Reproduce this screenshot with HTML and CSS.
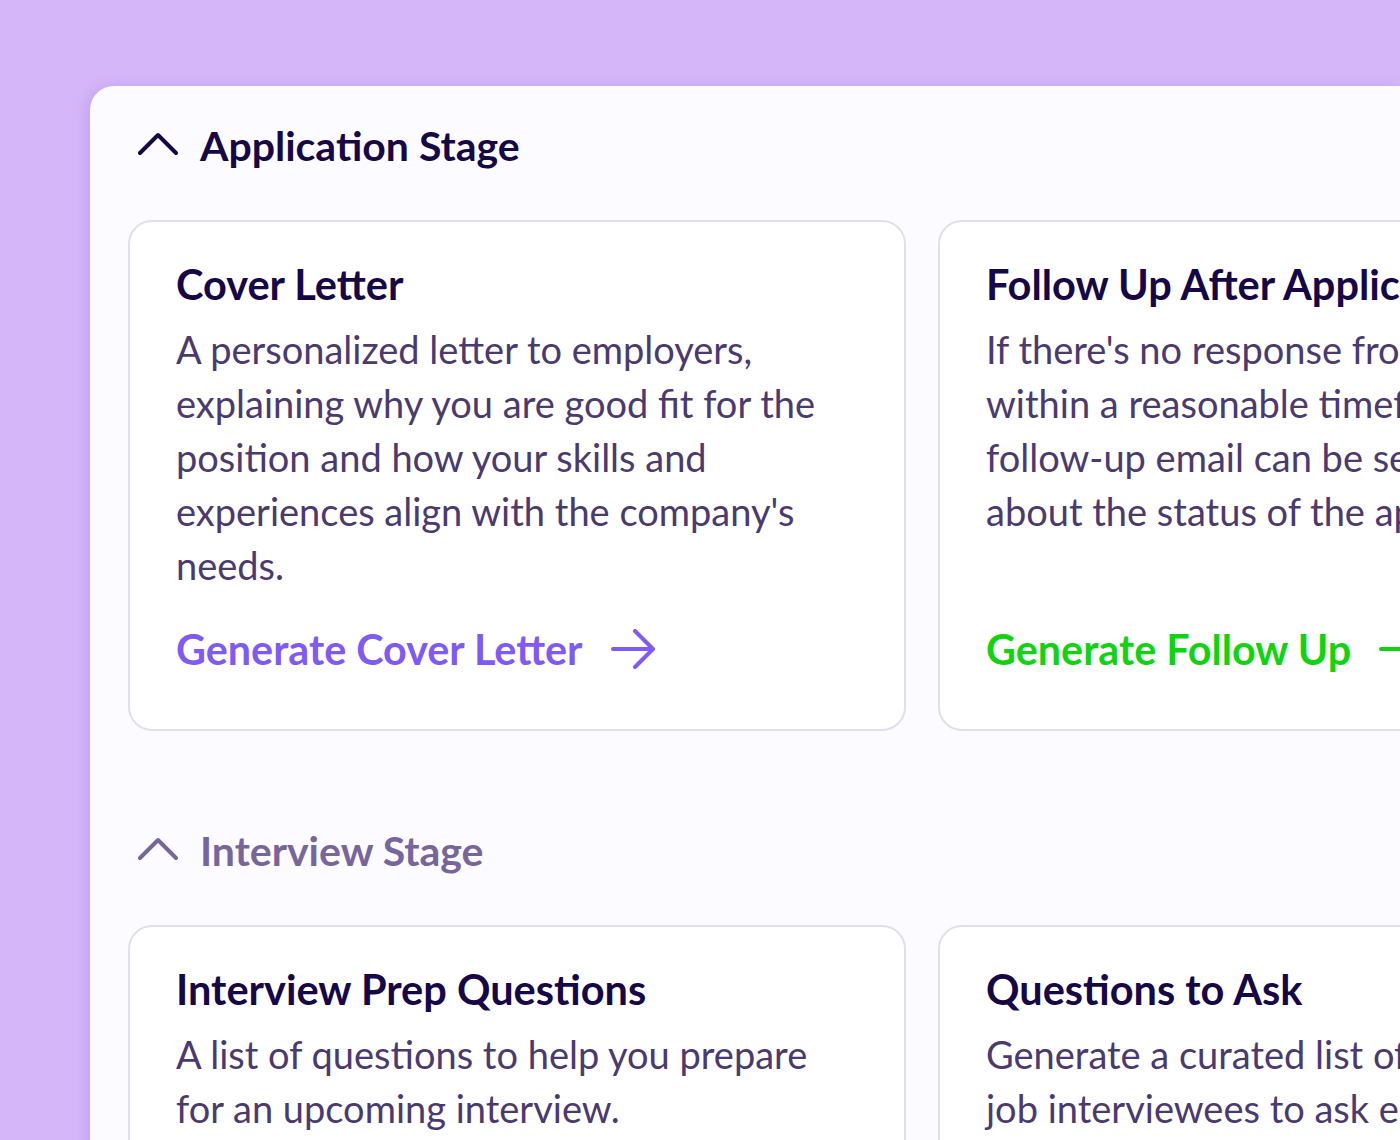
FILE: index.html
```html
<!DOCTYPE html>
<html lang="en">
<head>
<meta charset="utf-8">
<title>Stages</title>
<link rel="stylesheet" href="styles.css">
</head>
<body>
<main class="panel">
  <section class="stage">
    <h2 class="stage-head">
      <svg class="chevron" width="40" height="24" viewBox="0 0 40 24"><polyline points="2,21 20,3 38,21" fill="none" stroke="currentColor" stroke-width="4" stroke-linecap="round" stroke-linejoin="round"/></svg>
      <span>Application Stage</span>
    </h2>
    <div class="cards">
      <article class="card">
        <h3 class="card-title">Cover Letter</h3>
        <p class="card-desc">A personalized letter to employers, explaining why you are good fit for the position and how your skills and experiences align with the company's needs.</p>
        <a class="card-link purple" href="#">Generate Cover Letter
          <svg class="arrow" width="46" height="40" viewBox="0 0 46 40"><path d="M3 20H43M25 2L43 20L25 38" fill="none" stroke="currentColor" stroke-width="4" stroke-linecap="round" stroke-linejoin="round"/></svg>
        </a>
      </article>
      <article class="card">
        <h3 class="card-title">Follow Up After Application</h3>
        <p class="card-desc">If there's no response from the employer within a reasonable timeframe, a follow&#8209;up email can be sent to inquire about the status of the application.</p>
        <a class="card-link green" href="#">Generate Follow Up
          <svg class="arrow" width="46" height="40" viewBox="0 0 46 40"><path d="M3 20H43M25 2L43 20L25 38" fill="none" stroke="currentColor" stroke-width="4" stroke-linecap="round" stroke-linejoin="round"/></svg>
        </a>
      </article>
    </div>
  </section>
  <section class="stage">
    <h2 class="stage-head muted">
      <svg class="chevron" width="40" height="24" viewBox="0 0 40 24"><polyline points="2,21 20,3 38,21" fill="none" stroke="currentColor" stroke-width="4" stroke-linecap="round" stroke-linejoin="round"/></svg>
      <span>Interview Stage</span>
    </h2>
    <div class="cards">
      <article class="card">
        <h3 class="card-title">Interview Prep Questions</h3>
        <p class="card-desc">A list of questions to help you prepare for an upcoming interview.</p>
      </article>
      <article class="card">
        <h3 class="card-title">Questions to Ask</h3>
        <p class="card-desc">Generate a curated list of questions for job interviewees to ask employers during an interview.</p>
      </article>
    </div>
  </section>
</main>
</body>
</html>
```
FILE: styles.css
```css
html, body {
  margin: 0;
  padding: 0;
}
body {
  background: #d5b7f9;
  font-family: Lato, "Noto Sans", sans-serif;
  overflow: hidden;
  height: 1140px;
}
.panel {
  margin: 86px 0 0 90px;
  background: #fcfbff;
  border-top-left-radius: 24px;
  padding: 34px 0 0 38px;
  min-height: 1100px;
  box-shadow: -4px 0 14px rgba(120, 70, 190, 0.18);
}
.stage {
  margin-bottom: 94px;
}
.stage-head {
  display: flex;
  align-items: center;
  gap: 22px;
  margin: 0 0 50px 10px;
  height: 50px;
  font-size: 41px;
  font-weight: 700;
  color: #160847;
}
.stage-head.muted {
  color: #77669b;
}
.chevron {
  flex: none;
  margin-top: -2px;
}
.cards {
  display: grid;
  grid-template-columns: 778px 778px;
  gap: 32px;
}
.card {
  box-sizing: border-box;
  background: #ffffff;
  border: 2px solid #e2dfeb;
  border-radius: 24px;
  padding: 38px 46px 56px 46px;
  display: flex;
  flex-direction: column;
  min-height: 511px;
}
.card-title {
  margin: 0 0 14px;
  font-size: 41.5px;
  line-height: 48px;
  font-weight: 700;
  color: #160847;
}
.card-desc {
  margin: 0;
  font-size: 38px;
  line-height: 54px;
  color: #4a3a6e;
}
.card-link {
  margin-top: auto;
  padding-top: 33px;
  display: flex;
  align-items: center;
  gap: 27px;
  font-size: 41.3px;
  line-height: 48px;
  font-weight: 700;
  text-decoration: none;
}
.card-link.purple { color: #7f5af7; }
.card-link.green { color: #10d410; }
.arrow { flex: none; }
```
